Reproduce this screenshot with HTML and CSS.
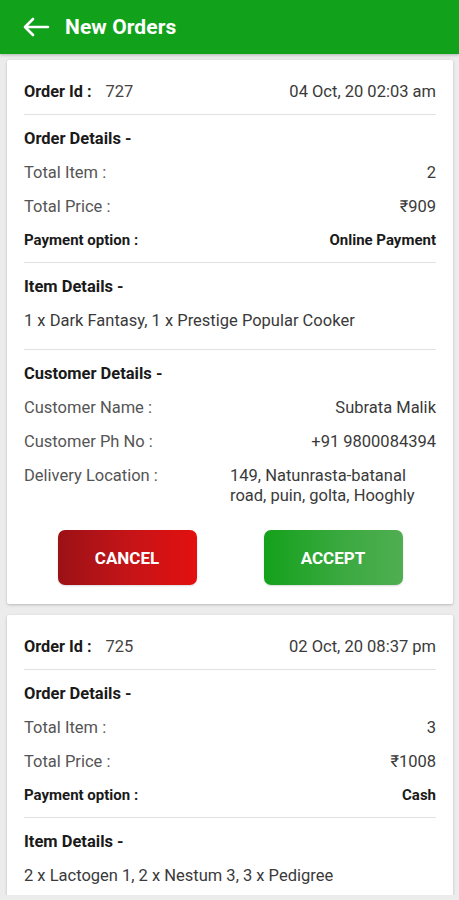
FILE: index.html
```html
<!DOCTYPE html>
<html lang="en">
<head>
<meta charset="utf-8">
<title>New Orders</title>
<link rel="stylesheet" href="styles.css">
</head>
<body>
<header class="appbar">
  <svg class="back" width="28" height="20" viewBox="0 0 28 20" aria-hidden="true">
    <path d="M26 10H3M11 2L3 10l8 8" fill="none" stroke="#fff" stroke-width="2.6" stroke-linecap="round" stroke-linejoin="round"/>
  </svg>
  <h1 class="title">New Orders</h1>
</header>

<main class="list">
  <section class="card">
    <div class="row head-row">
      <span class="id"><b class="strong">Order Id :</b><span class="idval">727</span></span>
      <span class="val">04 Oct, 20 02:03 am</span>
    </div>
    <div class="section">
      <div class="row"><span class="heading">Order Details -</span></div>
      <div class="row"><span class="lbl">Total Item :</span><span class="val">2</span></div>
      <div class="row"><span class="lbl">Total Price :</span><span class="val">₹909</span></div>
      <div class="row"><span class="small-strong">Payment option :</span><span class="small-strong">Online Payment</span></div>
    </div>
    <div class="section">
      <div class="row"><span class="heading">Item Details -</span></div>
      <div class="row items"><span class="val">1 x Dark Fantasy, 1 x Prestige Popular Cooker</span></div>
    </div>
    <div class="section">
      <div class="row"><span class="heading">Customer Details -</span></div>
      <div class="row"><span class="lbl">Customer Name :</span><span class="val">Subrata Malik</span></div>
      <div class="row"><span class="lbl">Customer Ph No :</span><span class="val">+91 9800084394</span></div>
      <div class="addr"><span class="lbl">Delivery Location :</span><span class="val">149, Natunrasta-batanal road, puin, golta, Hooghly</span></div>
    </div>
    <div class="actions">
      <button class="btn cancel">CANCEL</button>
      <button class="btn accept">ACCEPT</button>
    </div>
  </section>

  <section class="card">
    <div class="row head-row">
      <span class="id"><b class="strong">Order Id :</b><span class="idval">725</span></span>
      <span class="val">02 Oct, 20 08:37 pm</span>
    </div>
    <div class="section">
      <div class="row"><span class="heading">Order Details -</span></div>
      <div class="row"><span class="lbl">Total Item :</span><span class="val">3</span></div>
      <div class="row"><span class="lbl">Total Price :</span><span class="val">₹1008</span></div>
      <div class="row"><span class="small-strong">Payment option :</span><span class="small-strong">Cash</span></div>
    </div>
    <div class="section">
      <div class="row"><span class="heading">Item Details -</span></div>
      <div class="row items"><span class="val">2 x Lactogen 1, 2 x Nestum 3, 3 x Pedigree</span></div>
    </div>
  </section>
</main>
</body>
</html>
```

FILE: styles.css
```css
* { box-sizing: border-box; }
html, body { margin: 0; padding: 0; }
body {
  background: #ececec;
  font-family: Roboto, "Liberation Sans", Arial, sans-serif;
  color: #444;
  overflow: hidden;
  height: 900px;
}
.appbar {
  height: 54px;
  background: #12a11a;
  display: flex;
  align-items: center;
  padding-left: 22px;
  gap: 15px;
  box-shadow: 0 1px 3px rgba(0,0,0,0.25);
  position: relative;
  z-index: 1;
}
.back { display: block; }
.title {
  margin: 0;
  color: #fff;
  font-size: 21px;
  font-weight: 700;
  letter-spacing: 0.1px;
}
.list {
  height: 841px;
  overflow: hidden;
  padding: 6px 6px 0 7px;
  display: flex;
  flex-direction: column;
  gap: 11px;
}
.card {
  flex-shrink: 0;
  background: #fff;
  border-radius: 2px;
  box-shadow: 0 1px 3px rgba(0,0,0,0.22);
  padding: 14px 17px 19px;
}
.row {
  height: 34px;
  display: flex;
  align-items: center;
  justify-content: space-between;
  font-size: 16.5px;
}
.head-row { margin-bottom: 6px; }
.section {
  border-top: 1px solid #e2e2e2;
  padding-top: 6px;
  padding-bottom: 5px;
}
.items { margin-bottom: 7px; }
.strong { font-weight: 700; color: #1a1a1a; font-size: 16.3px; }
.idval { margin-left: 14px; color: #444; }
.heading { font-weight: 700; color: #1a1a1a; font-size: 16.5px; }
.lbl { color: #555; }
.val { color: #3a3a3a; }
.small-strong { font-weight: 700; color: #1a1a1a; font-size: 15px; }
.addr {
  display: grid;
  grid-template-columns: 1fr 1fr;
  font-size: 16.5px;
  line-height: 20px;
  padding-top: 8px;
  padding-bottom: 2px;
}
.actions {
  display: flex;
  justify-content: space-around;
  padding-top: 17px;
}
.btn {
  width: 139px;
  height: 55px;
  border: none;
  border-radius: 7px;
  color: #fff;
  font-family: Roboto, "Liberation Sans", Arial, sans-serif;
  font-size: 17px;
  font-weight: 700;
  box-shadow: 0 1px 2px rgba(0,0,0,0.15);
}
.cancel { background: linear-gradient(90deg, #9b1116 0%, #c41418 50%, #e3100f 100%); }
.accept { background: linear-gradient(90deg, #14a11b 0%, #3aa93f 55%, #4fae52 100%); }
```
